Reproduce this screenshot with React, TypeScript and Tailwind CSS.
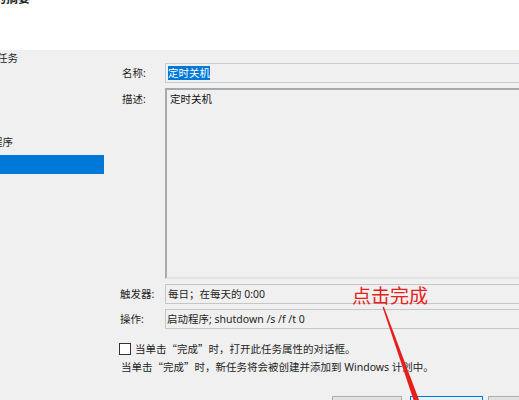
const Q = ({ children }: { children: string }) => (
  <span className="font-['Noto_Sans_CJK_SC',sans-serif] inline-block w-[10.5px] text-center">{children}</span>
);

export default function App() {
  return (
    <div className="relative w-[519px] h-[400px] overflow-hidden bg-[#f0f0f0] font-['Noto_Sans','Noto_Sans_CJK_SC',sans-serif] text-[10.5px] leading-[14px] text-[#1e1e1e]">
      <div className="h-[50px] bg-white overflow-hidden">
        <div className="-mt-[8px] -ml-[6px] text-[12px] font-bold leading-[14px] whitespace-nowrap">的摘要</div>
      </div>
      <div className="flex h-[350px]">
        <nav className="w-[104px] shrink-0 flex flex-col overflow-hidden">
          <div className="mt-[1px] h-[14px] -ml-[3px] whitespace-nowrap">任务</div>
          <div className="mt-[70px] h-[14px] -ml-[8px] whitespace-nowrap">程序</div>
          <div className="mt-[6px] h-[19px] bg-[#0078d7]"></div>
        </nav>
        <main className="flex flex-col pl-[16px] pt-[13px] w-[440px] shrink-0">
          <div className="grid grid-cols-[45px_420px] gap-y-[5px]">
            <div className="flex items-center pl-[2px] h-[20px]">名称:</div>
            <div className="h-[20px] border border-[#c3cbd3] bg-[#f0f0f0] flex items-center pl-[2px]">
              <span className="bg-[#0078d7] text-white leading-[14px]">定时关机</span>
            </div>
            <div className="pl-[2px] pt-[4px]">描述:</div>
            <div className="h-[191px] border-2 border-t-[#a9a9a9] border-l-[#a9a9a9] border-r-[#e3e3e3] border-b-[#e3e3e3] bg-[#f0f0f0] pl-[3px] pt-[2px] text-[#111]">
              定时关机
            </div>
            <div className="flex items-center h-[20px]">触发器:</div>
            <div className="h-[20px] border border-[#c6c6c6] bg-[#f0f0f0] flex items-center pl-[2px] whitespace-nowrap">每日；在每天的 0:00</div>
            <div className="flex items-center h-[20px]">操作:</div>
            <div className="h-[20px] border border-[#c6c6c6] bg-[#f0f0f0] flex items-center pl-[1px] whitespace-nowrap">启动程序; shutdown /s /f /t 0</div>
          </div>
          <div className="mt-[14px] flex items-center h-[12px] -ml-[1px] whitespace-nowrap">
            <span className="w-[12px] h-[12px] border border-[#333] bg-white shrink-0"></span>
            <span className="ml-[4px]">当单击<Q>“</Q>完成<Q>”</Q>时，打开此任务属性的对话框。</span>
          </div>
          <div className="mt-[5px] ml-[1px] h-[14px] whitespace-nowrap">当单击<Q>“</Q>完成<Q>”</Q>时，新任务将会被创建并添加到 Windows 计划中。</div>
          <div className="mt-[22px] ml-[212px] flex gap-[6px]">
            <div className="w-[70px] h-[23px] border border-[#adadad] bg-[#e1e1e1] shrink-0"></div>
            <div className="ml-[2px] w-[73px] h-[23px] border border-[#0078d7] bg-[#e5f1fb] shrink-0"></div>
            <div className="ml-[-1px] w-[70px] h-[23px] border border-[#adadad] bg-[#e1e1e1] shrink-0"></div>
          </div>
        </main>
      </div>
      <div className="absolute left-[352px] top-[285px] text-[19px] leading-[22px] text-[#e5201c] whitespace-nowrap">点击完成</div>
      <svg className="absolute left-0 top-0 pointer-events-none" width="519" height="400" viewBox="0 0 519 400">
        <polygon points="382.5,307 384,307 419,400 413.5,400" fill="#e5201c" />
      </svg>
    </div>
  );
}
